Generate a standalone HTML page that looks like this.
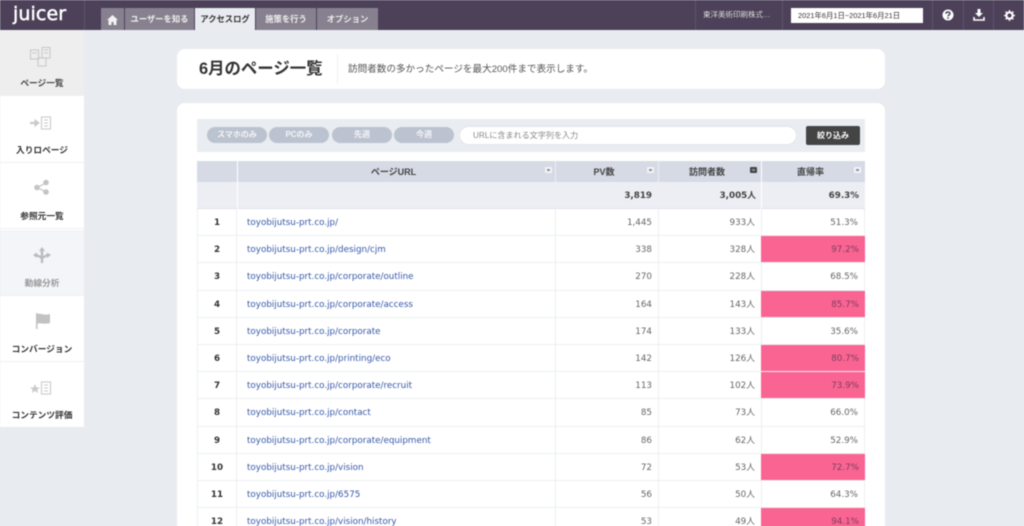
<!DOCTYPE html>
<html lang="ja"><head><meta charset="utf-8"><title>Juicer</title>
<style>
*{box-sizing:border-box;margin:0;padding:0}
html,body{width:1024px;height:526px;overflow:hidden;background:#e8ebf0}
body{position:relative;font-family:"DejaVu Sans","Noto Sans CJK JP",sans-serif;color:#333;filter:blur(.45px)}
.a{position:absolute}
#top{left:0;top:0;width:1024px;height:30px;background:#4c4158}
.tab{position:absolute;top:8px;height:22px;background:#87818f;color:#eee;font-size:8.3px;font-weight:700;line-height:22px;text-align:center;font-family:"Liberation Sans","Noto Sans CJK JP",sans-serif}
.tab.on{background:#e8ebf0;color:#333;top:8px}
.sep{position:absolute;top:0;width:1px;height:30px;background:#5e5469}
#side{left:0;top:30px;width:84px;height:397px;background:#fff}
.si{position:absolute;left:0;width:84px;height:66px;border-bottom:1px solid #f0f0f0;text-align:center;font-size:8.7px;font-weight:700;font-family:"Liberation Sans","Noto Sans CJK JP",sans-serif}
.si span{position:absolute;left:0;right:0;top:47px;line-height:12px}
.si svg{position:absolute;left:26px;top:14px}
.card{background:#fff;border-radius:8px}
.pill{position:absolute;top:127px;width:60px;height:16px;border-radius:8px;background:#bcc3d0;color:#f4f5f8;font-size:8px;font-weight:700;line-height:16px;text-align:center;font-family:"Liberation Sans","Noto Sans CJK JP",sans-serif}
.row{position:absolute;left:197px;width:668px;height:27.2px;border-bottom:1px solid #eceef1;font-size:8.75px;color:#666;line-height:29.500px}
.row div{position:absolute;top:0;height:100%}
.n{left:0;width:40px;text-align:center;font-weight:700;color:#333;background:#fff;border-left:1px solid #eceef1;border-right:1px solid #eceef1}
.u{left:50px;color:#3558a8;white-space:nowrap}
.p{left:358px;width:97px;text-align:right}
.v{left:461px;width:97px;text-align:right}
.r{left:564px;width:104px;text-align:right;padding-right:6px;border-left:1px solid #eceef1;border-right:1px solid #eceef1}
.hot{background:#fa6492;color:#7d4060;border:0}
.vl{position:absolute;top:161px;width:1px;height:365px;background:#eceef1}
.h{position:absolute;top:161px;height:21px;background:#d5dae5;font-size:9px;font-weight:700;line-height:22px;text-align:center;color:#444;font-family:"Liberation Sans","Noto Sans CJK JP",sans-serif}
.ic{position:absolute;top:167px;width:7px;height:6px;background:#f3f4f7;border-radius:1px}
.ic:after{content:"";position:absolute;left:2px;top:2px;width:3px;height:1.500px;background:#8a8f9a}
.s{position:absolute;top:182px;height:27px;background:#eceef4;border-bottom:1px solid #e0e3ea;font-size:8.75px;font-weight:700;line-height:29px;text-align:right;padding-right:6px;color:#444}
</style></head><body>
<div class="a" id="top"></div>
<div class="a" style="left:13px;top:4px;color:#fff;font:400 19px/20px 'DejaVu Sans',sans-serif;-webkit-text-stroke:.5px #fff;letter-spacing:.1px">juicer</div>
<div class="sep" style="left:84px"></div>
<div class="tab" style="left:101px;width:23px"><svg width="11" height="10" viewBox="0 0 11 10" style="margin-top:7px"><path d="M5.500 0L11 5H9.500V10H6.500V7H4.500V10H1.500V5H0Z" fill="#f2f2f2"/></svg></div>
<div class="tab" style="left:125px;width:69px">ユーザーを知る</div>
<div class="tab on" style="left:195px;width:60px">アクセスログ</div>
<div class="tab" style="left:256px;width:60px">施策を行う</div>
<div class="tab" style="left:317px;width:61px">オプション</div>
<div class="sep" style="left:695px"></div><div class="sep" style="left:782px"></div><div class="sep" style="left:932px"></div><div class="sep" style="left:963px"></div><div class="sep" style="left:993px"></div>
<div class="a" style="left:703px;top:9px;color:#ddd;font:7.500px/12px 'Liberation Sans','Noto Sans CJK JP',sans-serif;white-space:nowrap">東洋美術印刷株式…</div>
<div class="a" style="left:791px;top:8px;width:132px;height:15px;background:#fff;color:#333;font:7.400px/15px 'Liberation Sans','Noto Sans CJK JP',sans-serif;padding-left:7px;white-space:nowrap">2021年6月1日~2021年6月21日</div>
<svg class="a" style="left:942px;top:9px" width="12" height="12" viewBox="0 0 12 12"><circle cx="6" cy="6" r="5.500" fill="#fff"/><path d="M4 4.800C4 2.500 8 2.500 8 4.600C8 6 6 6 6 7.300" fill="none" stroke="#4c4158" stroke-width="1.500"/><rect x="5.200" y="8.300" width="1.600" height="1.500" fill="#4c4158"/></svg>
<svg class="a" style="left:973px;top:9px" width="12" height="12" viewBox="0 0 12 12"><path d="M4.500 0H7.500V4H10L6 8L2 4H4.500Z" fill="#fff"/><path d="M1 8V11H11V8" fill="none" stroke="#fff" stroke-width="1.600"/></svg>
<svg class="a" style="left:1004px;top:10px" width="11" height="11" viewBox="0 0 11 11"><circle cx="5.500" cy="5.500" r="3.200" fill="none" stroke="#fff" stroke-width="2.200"/><path d="M5.500 0V11M0 5.500H11M1.600 1.600L9.400 9.400M9.400 1.600L1.600 9.400" stroke="#fff" stroke-width="1.300" stroke-dasharray="2 7 2"/></svg>

<div class="a" id="side"></div>
<div class="si" style="top:30px;background:#eeeeee;color:#444"><svg width="32" height="32" viewBox="0 0 32 32" fill="none" stroke="#c9c9c9" stroke-width="1.100"><rect x="4.500" y="6" width="8" height="9"/><rect x="16" y="3.500" width="8" height="10.500"/><rect x="12" y="14" width="8" height="8"/><path d="M6 9H11M18 6H22M18 9H22"/></svg><span>ページ一覧</span></div>
<div class="si" style="top:96.500px"><svg width="32" height="32" viewBox="0 0 32 32" fill="none" stroke="#cacaca" stroke-width="1.100"><path d="M4 12H10" stroke-width="2.200"/><path d="M9 9L13 12L9 15Z" fill="#cacaca"/><rect x="15.500" y="6" width="9" height="12"/><path d="M18 9H22M18 12H22M18 15H22"/></svg><span>入りロページ</span></div>
<div class="si" style="top:163px"><svg style="top:12px" width="32" height="32" viewBox="0 0 32 32" fill="#c4c4c4" stroke="#c4c4c4" stroke-width="1.200"><path d="M20 8L11 12.500L20 17" fill="none"/><circle cx="20" cy="7.500" r="2.200"/><circle cx="11" cy="12.500" r="2.200"/><circle cx="20" cy="17" r="2.200"/></svg><span>参照元一覧</span></div>
<div class="si" style="top:229.500px;background:#f3f5f8;color:#999"><svg style="top:13px" width="32" height="32" viewBox="0 0 32 32" fill="#b9bcbc"><path d="M16 4L19 8H17.200V13L21 11V9.500L25 12L21 15V13.500L17.200 15.500V20H14.800V15.500L11 13.500V15L7 12L11 9.500V11L14.800 13V8H13Z"/></svg><span>動線分析</span></div>
<div class="si" style="top:296px"><svg style="top:13px" width="32" height="32" viewBox="0 0 32 32" fill="#c2c2c2"><rect x="10" y="4" width="1.500" height="16"/><path d="M11.500 5C14 3.500 17 7 24 5V14C17 16 14 13 11.500 15Z"/></svg><span>コンバージョン</span></div>
<div class="si" style="top:362px;height:65px;border:0"><svg width="32" height="32" viewBox="0 0 32 32" fill="none" stroke="#cacaca" stroke-width="1.100"><path d="M9 8L10.500 11.500H14L11.200 13.700L12.200 17L9 15L5.800 17L6.800 13.700L4 11.500H7.500Z" fill="#cacaca" stroke="none"/><rect x="15.500" y="6" width="9" height="12"/><path d="M18 9H22M18 12H22M18 15H22"/></svg><span>コンテンツ評価</span></div>

<div class="a card" style="left:177px;top:49px;width:708px;height:40px"></div>
<div class="a" style="left:199px;top:59px;font:700 16.400px/20px 'Liberation Sans','Noto Sans CJK JP',sans-serif;color:#333;white-space:nowrap">6月のページ一覧</div>
<div class="a" style="left:337px;top:54px;width:1px;height:30px;background:#f0f0f0"></div>
<div class="a" style="left:348px;top:63px;font:9.600px/14px 'Liberation Sans','Noto Sans CJK JP',sans-serif;color:#555;white-space:nowrap">訪問者数の多かったページを最大200件まで表示します。</div>

<div class="a card" style="left:177px;top:103px;width:708px;height:440px"></div>
<div class="a" style="left:197px;top:119px;width:668px;height:33px;background:#e9ecf1"></div>
<div class="pill" style="left:207px">スマホのみ</div><div class="pill" style="left:269px">PCのみ</div><div class="pill" style="left:332px">先週</div><div class="pill" style="left:394px">今週</div>
<div class="a" style="left:459px;top:126px;width:338px;height:19px;border-radius:10px;background:#fff;border:1px solid #e2e5ea;color:#888;font:8.100px/17px 'Liberation Sans','Noto Sans CJK JP',sans-serif;padding-left:13px">URLに含まれる文字列を入力</div>
<div class="a" style="left:806px;top:126px;width:54px;height:19px;border-radius:2px;background:#444;color:#fff;font:700 8px/19px 'Liberation Sans','Noto Sans CJK JP',sans-serif;text-align:center">絞り込み</div>

<div class="h" style="left:197px;width:40px"></div>
<div class="h" style="left:238px;width:317px;padding-right:6px">ページURL</div>
<div class="h" style="left:556px;width:102px;padding-right:6px">PV数</div>
<div class="h" style="left:659px;width:102px;padding-right:6px">訪問者数</div>
<div class="h" style="left:762px;width:103px;padding-right:6px">直帰率</div>
<div class="ic" style="left:545px"></div><div class="ic" style="left:647px"></div><div class="ic" style="left:750px;background:#444"></div><div class="ic" style="left:854px"></div>

<div class="s" style="left:197px;width:40px"></div>
<div class="s" style="left:238px;width:317px"></div>
<div class="s" style="left:556px;width:102px">3,819</div>
<div class="s" style="left:659px;width:102px;padding-right:5px">3,005人</div>
<div class="s" style="left:762px;width:103px">69.3%</div>

<div class="row" style="top:209px"><div class="n">1</div><div class="u">toyobijutsu-prt.co.jp/</div><div class="p">1,445</div><div class="v">933人</div><div class="r">51.3%</div></div>
<div class="row" style="top:236.200px"><div class="n">2</div><div class="u">toyobijutsu-prt.co.jp/design/cjm</div><div class="p">338</div><div class="v">328人</div><div class="r hot">97.2%</div></div>
<div class="row" style="top:263.400px"><div class="n">3</div><div class="u">toyobijutsu-prt.co.jp/corporate/outline</div><div class="p">270</div><div class="v">228人</div><div class="r">68.5%</div></div>
<div class="row" style="top:290.600px"><div class="n">4</div><div class="u">toyobijutsu-prt.co.jp/corporate/access</div><div class="p">164</div><div class="v">143人</div><div class="r hot">85.7%</div></div>
<div class="row" style="top:317.800px"><div class="n">5</div><div class="u">toyobijutsu-prt.co.jp/corporate</div><div class="p">174</div><div class="v">133人</div><div class="r">35.6%</div></div>
<div class="row" style="top:345px"><div class="n">6</div><div class="u">toyobijutsu-prt.co.jp/printing/eco</div><div class="p">142</div><div class="v">126人</div><div class="r hot">80.7%</div></div>
<div class="row" style="top:372.200px"><div class="n">7</div><div class="u">toyobijutsu-prt.co.jp/corporate/recruit</div><div class="p">113</div><div class="v">102人</div><div class="r hot">73.9%</div></div>
<div class="row" style="top:399.400px"><div class="n">8</div><div class="u">toyobijutsu-prt.co.jp/contact</div><div class="p">85</div><div class="v">73人</div><div class="r">66.0%</div></div>
<div class="row" style="top:426.600px"><div class="n">9</div><div class="u">toyobijutsu-prt.co.jp/corporate/equipment</div><div class="p">86</div><div class="v">62人</div><div class="r">52.9%</div></div>
<div class="row" style="top:453.800px"><div class="n">10</div><div class="u">toyobijutsu-prt.co.jp/vision</div><div class="p">72</div><div class="v">53人</div><div class="r hot">72.7%</div></div>
<div class="row" style="top:481px"><div class="n">11</div><div class="u">toyobijutsu-prt.co.jp/6575</div><div class="p">56</div><div class="v">50人</div><div class="r">64.3%</div></div>
<div class="row" style="top:508.200px"><div class="n">12</div><div class="u">toyobijutsu-prt.co.jp/vision/history</div><div class="p">53</div><div class="v">49人</div><div class="r hot">94.1%</div></div>
<div class="vl" style="left:555px"></div><div class="vl" style="left:658px"></div>
</body></html>
